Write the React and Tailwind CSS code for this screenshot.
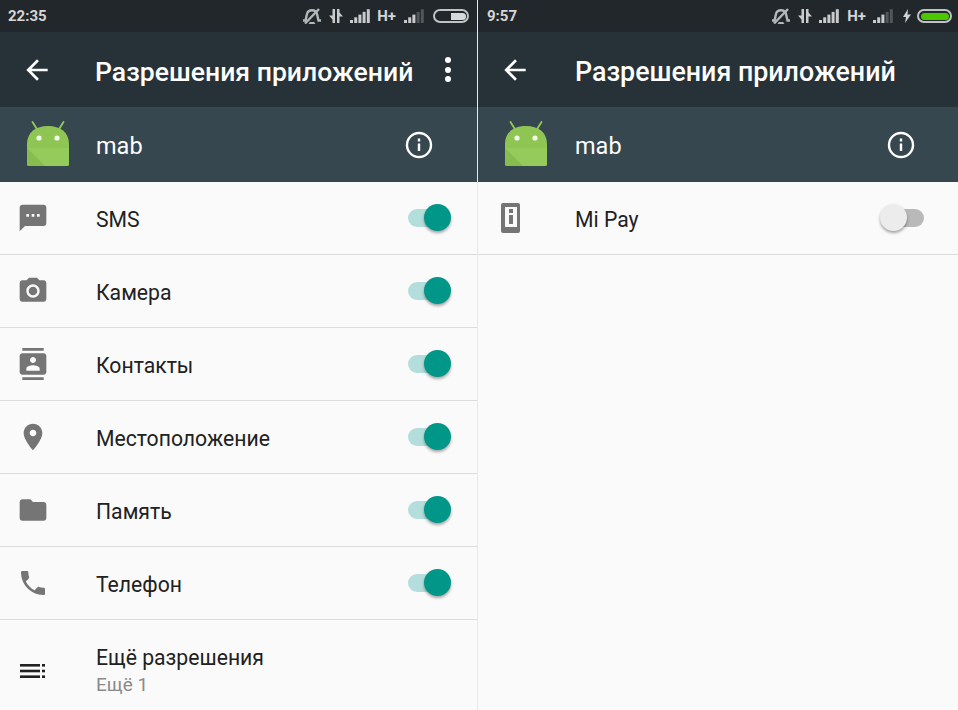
import React from 'react';

const icons = {
  sms: 'M20 2H4c-1.1 0-1.99.9-1.99 2L2 22l4-4h14c1.1 0 2-.9 2-2V4c0-1.1-.9-2-2-2zM9 11H7V9h2v2zm4 0h-2V9h2v2zm4 0h-2V9h2v2z',
  camera: 'M9 2L7.17 4H4c-1.1 0-2 .9-2 2v12c0 1.1.9 2 2 2h16c1.1 0 2-.9 2-2V6c0-1.1-.9-2-2-2h-3.17L15 2H9zm3 15c-2.76 0-5-2.24-5-5s2.24-5 5-5 5 2.24 5 5-2.24 5-5 5zm0-8.2a3.2 3.2 0 1 0 0 6.4 3.2 3.2 0 0 0 0-6.4z',
  contacts: 'M20 0H4v2h16V0zM4 24h16v-2H4v2zM20 4H4c-1.1 0-2 .9-2 2v12c0 1.1.9 2 2 2h16c1.1 0 2-.9 2-2V6c0-1.1-.9-2-2-2zm-8 2.75c1.24 0 2.25 1.01 2.25 2.25s-1.01 2.25-2.25 2.25S9.75 10.24 9.75 9 10.76 6.75 12 6.75zM17 17H7v-1.5c0-1.67 3.33-2.5 5-2.5s5 .83 5 2.5V17z',
  location: 'M12 2C8.13 2 5 5.13 5 9c0 5.25 7 13 7 13s7-7.75 7-13c0-3.87-3.13-7-7-7zm0 9.5c-1.38 0-2.5-1.12-2.5-2.5s1.12-2.5 2.5-2.5 2.5 1.12 2.5 2.5-1.12 2.5-2.5 2.5z',
  folder: 'M10 4H4c-1.1 0-1.99.9-1.99 2L2 18c0 1.1.9 2 2 2h16c1.1 0 2-.9 2-2V8c0-1.1-.9-2-2-2h-8l-2-2z',
  phone: 'M6.62 10.79c1.44 2.83 3.76 5.14 6.59 6.59l2.2-2.2c.27-.27.67-.36 1.02-.24 1.12.37 2.33.57 3.57.57.55 0 1 .45 1 1V20c0 .55-.45 1-1 1-9.39 0-17-7.61-17-17 0-.55.45-1 1-1h3.5c.55 0 1 .45 1 1 0 1.25.2 2.45.57 3.57.11.35.03.74-.25 1.02l-2.2 2.2z',
};

const permissions = [
  { name: 'SMS', icon: 'sms' },
  { name: 'Камера', icon: 'camera' },
  { name: 'Контакты', icon: 'contacts' },
  { name: 'Местоположение', icon: 'location' },
  { name: 'Память', icon: 'folder' },
  { name: 'Телефон', icon: 'phone' },
];

const MaterialIcon = ({ name }) => (
  <svg viewBox="0 0 24 24" className="w-8 h-8 fill-[#757575]">
    <path d={icons[name]} fillRule="evenodd" />
  </svg>
);

const DeviceInfoIcon = () => (
  <svg viewBox="0 0 32 32" className="w-8 h-8">
    <rect x="6" y="1" width="19" height="30" rx="2" fill="#757575" />
    <rect x="10" y="5" width="12" height="20" fill="#fafafa" />
    <rect x="14" y="7" width="4" height="4" fill="#757575" />
    <rect x="14" y="13" width="4" height="9" fill="#757575" />
  </svg>
);

const MoreIcon = () => (
  <svg viewBox="0 0 32 32" className="w-8 h-8 mt-[6px] fill-[#212121]">
    <rect x="3" y="9" width="20" height="2.6" />
    <rect x="3" y="14.7" width="20" height="2.6" />
    <rect x="3" y="20.400" width="20" height="2.6" />
    <rect x="25" y="9" width="3" height="2.6" />
    <rect x="25" y="14.7" width="3" height="2.6" />
    <rect x="25" y="20.400" width="3" height="2.6" />
  </svg>
);

const Toggle = ({ on }) => (
  <div className="relative w-[44px] h-[28px]">
    <div className={`absolute top-[5px] h-[18px] rounded-full ${on ? 'left-0 w-[36px] bg-[#b4dedb]' : 'left-[7px] w-[37px] bg-[#b9b9b9]'}`}></div>
    <div className={`absolute top-0 w-[27px] h-[27px] rounded-full shadow-[0_2px_3px_rgba(0,0,0,0.35)] ${on ? 'left-[16px] bg-[#009688]' : 'left-0 bg-[#ececec]'}`}></div>
  </div>
);

const AndroidIcon = () => (
  <svg viewBox="0 0 44 46" className="w-[44px] h-[46px]">
    <path d="M6.500 1l5 8M37.500 1l-5 8" stroke="#93c956" strokeWidth="1.8" strokeLinecap="round" />
    <path d="M1 23C1 11 10 5 22 5s21 6 21 18v20c0 1.300-.8 2-2 2H3c-1.200 0-2-.7-2-2z" fill="#8fc653" />
    <path d="M1 27h42v16c0 1.300-.8 2-2 2H19z" fill="#95cb5b" />
    <path d="M1 27l18 18H3c-1.200 0-2-.7-2-2z" fill="#87bd4e" />
    <circle cx="13" cy="17" r="2.600" fill="#f1f8e9" />
    <circle cx="31" cy="17" r="2.600" fill="#f1f8e9" />
  </svg>
);

const BellOff = () => (
  <svg viewBox="0 0 20 16" className="w-5 h-4" fill="none" stroke="#b4b7b9" strokeWidth="2.400">
    <path d="M1 12.500h2.500L5 6c.5-2.200 2.500-3.700 5-3.700s4.500 1.500 5 3.700l1.500 6.500H19M7.500 14.500c.8 1 4.200 1 5 0" />
    <path d="M3 15.500L17 1" />
  </svg>
);

const DataArrows = () => (
  <svg viewBox="0 0 14 14" className="w-[14px] h-[14px] fill-[#c8cacb]">
    <path d="M3.500 0h2.500v14H3.500v-3.500L0 6.500h3.500zM8 0h2.500v3.500l3.500 4h-3.500V14H8z" />
  </svg>
);

const Signal = ({ filled }) => (
  <svg viewBox="0 0 21 14" className="w-[21px] h-[14px]">
    {[0, 1, 2, 3, 4].map((i) => (
      <rect key={i} x={i * 4.2} y={11 - i * 2.7} width="3" height={3 + i * 2.7} fill={i < filled ? '#c8cacb' : '#50565a'} />
    ))}
  </svg>
);

const Bolt = () => (
  <svg viewBox="0 0 8 14" className="w-2 h-[14px] fill-[#d0d2d3]">
    <path d="M5 0L0 8h3l-1 6 6-8.500H4.500z" />
  </svg>
);

const Battery = ({ charged }) => (
  <div className={`flex items-center h-[14px] rounded-full border-2 border-[#c0c3c4] p-[1.500px] ${charged ? 'w-[35px]' : 'w-[36px] justify-end'}`}>
    <div className={`h-full ${charged ? 'w-full bg-[#4cc800] rounded-full' : 'w-[15px] bg-[#d6d8d9] rounded-r-full'}`}></div>
  </div>
);

const StatusBar = ({ time, charged, paddingRight }) => (
  <div className={`h-8 bg-[#21272b] flex items-center ${paddingRight}`}>
    <span className={`text-[15px] font-bold text-[#d4d6d7] ${charged ? 'ml-[9px]' : 'ml-2'}`}>{time}</span>
    <div className="ml-auto flex items-center">
      <BellOff />
      <div className="ml-[7px]"><DataArrows /></div>
      <div className="ml-[7px]"><Signal filled={5} /></div>
      <span className={`${charged ? 'ml-[7px]' : 'ml-[6px]'} text-[15px] font-bold text-[#d4d6d7] leading-none`}>H+</span>
      <div className={charged ? 'ml-[7px]' : 'ml-[8px]'}><Signal filled={3} /></div>
      {charged && <div className="ml-[9px]"><Bolt /></div>}
      <div className={charged ? 'ml-[6px]' : 'ml-[8px]'}><Battery charged={charged} /></div>
    </div>
  </div>
);

const Header = ({ menu, infoRight, titleClass, mabLeft }) => (
  <>
    <div className="h-[75px] bg-[#263238] flex items-center">
      <svg viewBox="0 0 24 24" className="ml-[21px] w-8 h-8 flex-none fill-white">
        <path d="M20 11H7.830l5.590-5.590L12 4l-8 8 8 8 1.410-1.410L7.830 13H20z" />
      </svg>
      <h1 className={`${titleClass} mt-[5px] font-medium text-white whitespace-nowrap`}>Разрешения приложений</h1>
      {menu && (
        <div className="ml-auto mr-[26px] flex flex-col gap-[3.500px]">
          <div className="w-[6px] h-[6px] rounded-full bg-white"></div>
          <div className="w-[6px] h-[6px] rounded-full bg-white"></div>
          <div className="w-[6px] h-[6px] rounded-full bg-white"></div>
        </div>
      )}
    </div>
    <div className="h-[75px] bg-[#37474f] flex items-center">
      <div className="ml-[26px] mb-px"><AndroidIcon /></div>
      <span className={`${mabLeft} mt-1 text-[23.500px] text-white`}>mab</span>
      <svg viewBox="0 0 28 28" className={`ml-auto w-7 h-7 ${infoRight}`} fill="none" stroke="white" strokeWidth="2.400">
        <circle cx="14" cy="14" r="12" />
        <path d="M14 12.500v7.500M14 7.500v3" />
      </svg>
    </div>
  </>
);

const Row = ({ icon, name, tall, sub, toggleOn, toggle, pr, nameLeft = 'ml-[47px]' }) => (
  <div className={`flex items-center ${tall ? 'h-[90px]' : 'h-[73px] border-b border-[#dcdcdc]'} ${pr}`}>
    <div className="ml-[17px] w-8 h-8 flex-none">{icon}</div>
    <div className={`${nameLeft} ${tall ? 'pt-[13px]' : 'pt-1'}`}>
      <div className="text-[21.200px] leading-[26px] text-[#212121]">{name}</div>
      {sub && <div className="text-[19px] leading-[27px] text-[#8a8a8a]">{sub}</div>}
    </div>
    {toggle && <div className="ml-auto"><Toggle on={toggleOn} /></div>}
  </div>
);

export default function App() {
  return (
    <div className="w-[958px] h-[710px] overflow-hidden flex bg-[#fafafa] font-['Roboto',sans-serif]">
      <div className="w-[477px] flex-none">
        <StatusBar time="22:35" paddingRight="pr-2" />
        <Header menu infoRight="mr-[44px]" titleClass="ml-[42px] text-[26.600px]" mabLeft="ml-[26px]" />
        {permissions.map((p) => (
          <Row key={p.name} name={p.name} icon={<MaterialIcon name={p.icon} />} toggle toggleOn pr="pr-[25px]" />
        ))}
        <Row tall name="Ещё разрешения" sub="Ещё 1" icon={<MoreIcon />} />
      </div>
      <div className="w-px flex-none bg-[#e8e8e8]"></div>
      <div className="flex-1 min-w-0">
        <StatusBar time="9:57" charged paddingRight="pr-[6px]" />
        <Header infoRight="mr-[43px]" titleClass="ml-[44px] text-[26.800px]" mabLeft="ml-[27px]" />
        <Row name="Mi Pay" icon={<DeviceInfoIcon />} toggle toggleOn={false} pr="pr-[34px]" nameLeft="ml-[48px]" />
      </div>
    </div>
  );
}
